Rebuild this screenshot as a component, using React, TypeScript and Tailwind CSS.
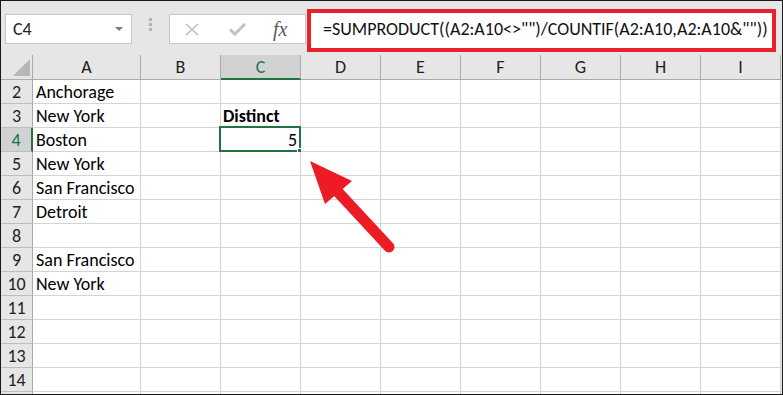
import React from 'react'

const cols = ['A', 'B', 'C', 'D', 'E', 'F', 'G', 'H', 'I']

// column A values per row, C3/C4 hold the result
const cityByRow: Record<number, string> = {
  2: 'Anchorage',
  3: 'New York',
  4: 'Boston',
  5: 'New York',
  6: 'San Francisco',
  7: 'Detroit',
  9: 'San Francisco',
  10: 'New York',
}

const rows = [2, 3, 4, 5, 6, 7, 8, 9, 10, 11, 12, 13, 14]

const font = { fontFamily: 'Carlito, Lato, "Open Sans", sans-serif' }

function Toolbar() {
  return (
    <div className="flex h-[54px] bg-[#e6e6e6]">
      {/* Name box */}
      <div className="ml-[4px] mt-[13px] flex h-[30px] w-[127px] items-center justify-between border border-[#c6c6c6] bg-white pl-[7px] pr-[8px]">
        <span className="text-[18px] leading-[30px] text-[#222]">C4</span>
        <svg width="8" height="4" viewBox="0 0 8 4">
          <path d="M0 0 L8 0 L4 4 Z" fill="#7a7a7a" />
        </svg>
      </div>

      {/* drag dots */}
      <div className="ml-[17px] mt-[17px] flex flex-col gap-[2px]">
        <div className="h-[3px] w-[3px] bg-[#b4b4b4]" />
        <div className="h-[3px] w-[3px] bg-[#b4b4b4]" />
        <div className="h-[3px] w-[3px] bg-[#b4b4b4]" />
      </div>

      {/* cancel / enter / fx */}
      <div className="ml-[17px] mt-[13px] flex h-[30px] w-[137px] items-center border border-[#c6c6c6] bg-white">
        <svg width="14" height="13" viewBox="0 0 14 13" className="ml-[15px]">
          <path d="M1 1 L13 12 M13 1 L1 12" stroke="#bcbcbc" strokeWidth="1.6" fill="none" />
        </svg>
        <svg width="17" height="13" viewBox="0 0 17 13" className="ml-[30px]">
          <path d="M1 6.5 L6 11 L16 1" stroke="#c2c2c2" strokeWidth="3" fill="none" />
        </svg>
        <span
          className="ml-[27px] text-[20px] italic leading-none text-[#5a5a5a]"
          style={{ fontFamily: '"Liberation Serif", serif' }}
        >
          fx
        </span>
      </div>

      {/* formula bar */}
      <div className="ml-[1px] mt-[8px] flex h-[43px] w-[469px] border-[4px] border-[#e8212b] bg-white pl-[12px]">
        <span className="text-[18px] leading-[32px] text-[#111]">
          =SUMPRODUCT((A2:A10&lt;&gt;"")/COUNTIF(A2:A10,A2:A10&amp;""))
        </span>
      </div>
    </div>
  )
}

function Grid() {
  return (
    <div className="grid grid-cols-[32px_108px_repeat(8,80px)]">
      {/* header row */}
      <div className="relative h-[25px] border-b border-r border-[#ababab] bg-[#e6e6e6]">
        <svg width="17" height="17" viewBox="0 0 17 17" className="absolute left-[12px] top-[4px]">
          <path d="M17 0 L17 17 L0 17 Z" fill="#b7b7b7" />
        </svg>
      </div>
      {cols.map((c) =>
        c === 'C' ? (
          <div
            key={c}
            className="flex h-[25px] justify-center border-b-2 border-r border-b-[#217346] border-r-[#ababab] bg-[#d2d2d2] text-[18px] leading-[25px] text-[#217346]"
          >
            {c}
          </div>
        ) : (
          <div
            key={c}
            className="flex h-[25px] justify-center border-b border-r border-[#ababab] bg-[#e6e6e6] text-[18px] leading-[25px] text-[#222]"
          >
            {c}
          </div>
        ),
      )}

      {rows.map((r) => (
        <React.Fragment key={r}>
          {r === 4 ? (
            <div className="flex h-[24px] justify-center border-b border-r-2 border-b-[#bdbdbd] border-r-[#217346] bg-[#d2d2d2] text-[18px] leading-[25px] text-[#217346]">
              {r}
            </div>
          ) : (
            <div className="flex h-[24px] justify-center border-b border-r border-b-[#bdbdbd] border-r-[#ababab] bg-[#e6e6e6] text-[18px] leading-[25px] text-[#222]">
              {r}
            </div>
          )}
          {cols.map((c) => (
            <div
              key={c}
              className="relative h-[24px] border-b border-r border-[#d4d4d4] bg-white text-[18px] leading-[25px] text-black"
            >
              {c === 'A' && cityByRow[r] && <span className="pl-[3px]">{cityByRow[r]}</span>}
              {c === 'C' && r === 3 && <span className="pl-[2px] font-bold">Distinct</span>}
              {c === 'C' && r === 4 && (
                <>
                  <div className="pr-[3px] text-right">5</div>
                  <div className="absolute left-[-2px] top-[-2px] h-[26px] w-[82px] border-2 border-[#217346]" />
                  <div className="absolute left-[76px] top-[20px] h-[7px] w-[7px] border border-white bg-[#217346]" />
                </>
              )}
            </div>
          ))}
        </React.Fragment>
      ))}

      {/* partly visible row 15 */}
      <div className="h-[3px] border-r border-[#ababab] bg-[#e6e6e6]" />
      {cols.map((c) => (
        <div key={c} className="h-[3px] border-r border-[#d4d4d4] bg-white" />
      ))}
    </div>
  )
}

export default function App() {
  return (
    <div
      className="relative h-[395px] w-[783px] overflow-hidden border border-[#1a1a1a] bg-[#e6e6e6]"
      style={font}
    >
      <Toolbar />
      <Grid />

      {/* red callout arrow */}
      <svg width="783" height="395" className="pointer-events-none absolute left-0 top-0">
        <path d="M309 160 L351 180 L324 203 Z" fill="#ed1c24" />
        <path d="M336 190 L388 246" stroke="#ed1c24" strokeWidth="11" strokeLinecap="round" fill="none" />
      </svg>
    </div>
  )
}
